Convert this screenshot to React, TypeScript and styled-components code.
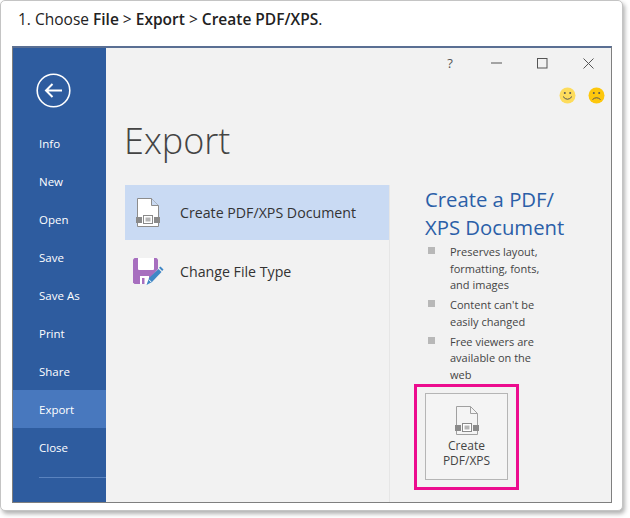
import React from "react";
import styled, { createGlobalStyle } from "styled-components";

const Global = createGlobalStyle`
  html, body { margin: 0; padding: 0; background: #fff; }
  body { width: 630px; height: 518px; overflow: hidden; font-family: "Open Sans", "Noto Sans", sans-serif; }
  * { box-sizing: border-box; }
`;

const Card = styled.div`
  width: 623px;
  height: 511px;
  background: #fff;
  border: 1px solid #c4c4c4;
  border-radius: 5px;
  box-shadow: 2px 3px 4px rgba(0, 0, 0, 0.3);
  padding: 0 10px 7px 11px;
  display: flex;
  flex-direction: column;
`;

const Caption = styled.div`
  height: 45px;
  padding: 8px 0 0 6px;
  font-size: 15.5px;
  line-height: 20px;
  color: #222;
  b { font-weight: 600; }
`;

const Window = styled.div`
  flex: 1;
  display: flex;
  min-height: 0;
  border: 1px solid #7f7f7f;
  border-top: 2px solid #5a6f93;
`;

const Sidebar = styled.nav`
  width: 93px;
  background: #2e5c9f;
  display: flex;
  flex-direction: column;
`;

const BackButton = styled.div`
  height: 76px;
  padding: 25px 0 0 23px;
`;

const NavItem = styled.div<{ $active?: boolean }>`
  height: 38px;
  padding-left: 26px;
  display: flex;
  align-items: center;
  font-size: 11.5px;
  color: #fff;
  background: ${(p) => (p.$active ? "#4878be" : "transparent")};
`;

const NavRule = styled.div`
  height: 1px;
  margin: 11px 0 0 26px;
  background: #5a83bf;
`;

const Main = styled.main`
  flex: 1;
  background: #f2f2f2;
  display: flex;
  flex-direction: column;
  min-width: 0;
`;

const WindowControls = styled.div`
  height: 30px;
  display: flex;
  justify-content: flex-end;
  align-items: center;
  padding-right: 15px;
  gap: 30px;
`;

const ControlSlot = styled.div`
  width: 16px;
  height: 16px;
  display: flex;
  align-items: center;
  justify-content: center;
  font-size: 13px;
  color: #555;
`;

const Smileys = styled.div`
  height: 34px;
  display: flex;
  justify-content: flex-end;
  align-items: center;
  padding-right: 6px;
  gap: 12px;
`;

const Heading = styled.h1`
  margin: 0;
  height: 73px;
  padding: 4px 0 0 18px;
  font-size: 36px;
  line-height: 50px;
  font-weight: 300;
  color: #444;
`;

const Columns = styled.div`
  flex: 1;
  display: flex;
  min-height: 0;
`;

const TypeList = styled.div`
  width: 284px;
  padding-left: 19px;
  border-right: 1px solid #e6e6e6;
`;

const TypeRow = styled.div<{ $selected?: boolean }>`
  height: ${(p) => (p.$selected ? 55 : 63)}px;
  display: flex;
  align-items: center;
  background: ${(p) => (p.$selected ? "#c9daf3" : "transparent")};
  font-size: 14.2px;
  line-height: 18px;
  color: #333;
`;

const TypeIcon = styled.div`
  width: 45px;
  margin-right: 10px;
  display: flex;
  justify-content: center;
`;

const Detail = styled.section`
  flex: 1;
  padding-left: 35px;
`;

const DetailTitle = styled.h2`
  margin: 0;
  height: 59px;
  font-size: 20.3px;
  line-height: 28px;
  font-weight: 400;
  color: #2b5fa8;
`;

const Bullets = styled.ul`
  margin: 0;
  padding: 0;
  list-style: none;
  width: 122px;
`;

const Bullet = styled.li`
  position: relative;
  padding: 0 0 3.5px 25px;
  font-size: 11px;
  line-height: 16.5px;
  color: #444;
  &::before {
    content: "";
    position: absolute;
    left: 3px;
    top: 3px;
    width: 7px;
    height: 7px;
    background: #b8b8b8;
  }
`;

const Callout = styled.div`
  width: 105px;
  height: 106px;
  margin: -3px 0 0 -11px;
  border: 3px solid #ec0c8e;
  padding: 6px 8px;
`;

const ExportButton = styled.div`
  width: 83px;
  height: 87px;
  border: 1px solid #b5b5b5;
  background: #f4f4f4;
  display: flex;
  flex-direction: column;
  align-items: center;
  padding-top: 12px;
  font-size: 12px;
  line-height: 15.5px;
  color: #444;
  text-align: center;
`;

const ButtonLabel = styled.span`
  margin-top: 3px;
`;

const DocIcon = ({ selected }: { selected?: boolean }) => (
  <svg width="24" height="29" viewBox="0 0 24 29" fill="none">
    <path
      d="M1.5 .5 H15.5 L22.5 7.5 V28.5 H1.5 Z"
      stroke={selected ? "#8c8c8c" : "#a0a0a0"}
      fill={selected ? "#fff" : "none"}
    />
    <path d="M15.5 .5 V7.5 H22.5" stroke={selected ? "#8c8c8c" : "#a0a0a0"} fill={selected ? "#c9daf3" : "none"} />
    <rect x="0" y="19" width="24" height="6" fill={selected ? "#fff" : "#f4f4f4"} />
    <rect x="0" y="19" width="6" height="6" fill="#8a8a8a" />
    <rect x="18" y="19" width="6" height="6" fill="#8a8a8a" />
    <rect x="7.5" y="17.5" width="9" height="8" stroke="#8a8a8a" fill="#fff" />
    <rect x="9.5" y="19.5" width="5" height="4" fill="#b5b5b5" />
  </svg>
);

const SaveIcon = () => (
  <svg width="33" height="28" viewBox="-2 0 33 28">
    <path d="M1.5 0 H23.5 L25 1.5 V11 L12 26 H1.5 L0 24.5 V1.5 Z" fill="#a76fbf" />
    <path d="M5 0 H21 V11 Q21 12 20 12 H6 Q5 12 5 11 Z" fill="#fff" />
    <rect x="7" y="18" width="9" height="8" fill="#fff" />
    <rect x="9" y="20" width="2.5" height="6" fill="#a76fbf" />
    <path d="M16 20 L25.5 11 L28.5 14 L19 24 L13.5 27 Z" fill="#3f87c6" />
    <path d="M26 9.8 L27.5 8.5 L30.5 11.5 L29.2 13 Z" fill="#3f87c6" />
    <path d="M15.8 21.5 L18.2 24" stroke="#fff" strokeWidth="1" />
  </svg>
);

const Smiley = ({ sad }: { sad?: boolean }) => (
  <svg width="17" height="17" viewBox="0 0 17 17" fill="none">
    <circle cx="8.5" cy="8.5" r="8" fill={sad ? "#fdc70c" : "#fddc5c"} />
    <circle cx="5.8" cy="6" r="1" fill="#555" />
    <circle cx="11.2" cy="6" r="1" fill="#555" />
    <path d={sad ? "M4.5 12.5 Q8.5 9 12.5 12.5" : "M4 9.5 Q8.5 15 13 9.5"} stroke="#555" strokeWidth="1" />
  </svg>
);

const navItems = ["Info", "New", "Open", "Save", "Save As", "Print", "Share", "Export", "Close"];

export default function App() {
  return (
    <>
      <Global />
      <Card>
        <Caption>
          1. Choose <b>File</b> &gt; <b>Export</b> &gt; <b>Create PDF/XPS</b>.
        </Caption>
        <Window>
          <Sidebar>
            <BackButton>
              <svg width="35" height="35" viewBox="0 0 35 35" fill="none" stroke="#fff">
                <circle cx="17.5" cy="17.5" r="16.3" strokeWidth="1.6" />
                <path d="M26 17.5 H10 M16.5 11 L10 17.5 L16.5 24" strokeWidth="2" />
              </svg>
            </BackButton>
            {navItems.map((n) => (
              <NavItem key={n} $active={n === "Export"}>{n}</NavItem>
            ))}
            <NavRule />
          </Sidebar>
          <Main>
            <WindowControls>
              <ControlSlot>?</ControlSlot>
              <ControlSlot>
                <svg width="11" height="2"><rect width="11" height="1" y="0.5" fill="#555" /></svg>
              </ControlSlot>
              <ControlSlot>
                <svg width="11" height="11" fill="none"><rect x=".5" y=".5" width="9.5" height="9.5" stroke="#555" /></svg>
              </ControlSlot>
              <ControlSlot>
                <svg width="11" height="11" fill="none"><path d="M.5 .5 L10.5 10.5 M10.5 .5 L.5 10.5" stroke="#555" /></svg>
              </ControlSlot>
            </WindowControls>
            <Smileys>
              <Smiley />
              <Smiley sad />
            </Smileys>
            <Heading>Export</Heading>
            <Columns>
              <TypeList>
                <TypeRow $selected>
                  <TypeIcon><DocIcon selected /></TypeIcon>
                  Create PDF/XPS Document
                </TypeRow>
                <TypeRow>
                  <TypeIcon><SaveIcon /></TypeIcon>
                  Change File Type
                </TypeRow>
              </TypeList>
              <Detail>
                <DetailTitle>Create a PDF/<br />XPS Document</DetailTitle>
                <Bullets>
                  <Bullet>Preserves layout, formatting, fonts, and images</Bullet>
                  <Bullet>Content can't be easily changed</Bullet>
                  <Bullet>Free viewers are available on the web</Bullet>
                </Bullets>
                <Callout>
                  <ExportButton>
                    <DocIcon />
                    <ButtonLabel>Create<br />PDF/XPS</ButtonLabel>
                  </ExportButton>
                </Callout>
              </Detail>
            </Columns>
          </Main>
        </Window>
      </Card>
    </>
  );
}
